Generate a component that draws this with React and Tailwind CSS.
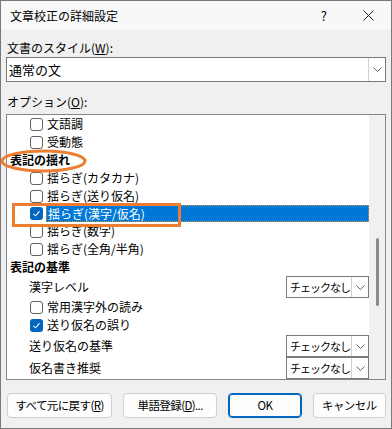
import React from 'react';

const font = { fontFamily: '"Noto Sans CJK JP", "Noto Sans", sans-serif' };

function Check({ on }) {
  if (on) {
    return (
      <span className="w-[13px] h-[13px] rounded-[3px] bg-[#0067c0] flex items-center justify-center shrink-0">
        <svg width="9" height="9" viewBox="0 0 9 9">
          <polyline points="1.5,4.8 3.6,6.8 7.5,2.2" fill="none" stroke="#fff" strokeWidth="1.1" />
        </svg>
      </span>
    );
  }
  return <span className="w-[13px] h-[13px] rounded-[3px] border border-[#616161] bg-white shrink-0" />;
}

function Chevron() {
  return (
    <svg width="9" height="5" viewBox="0 0 9 5">
      <polyline points="0.5,0.5 4.5,4.5 8.5,0.5" fill="none" stroke="#606060" strokeWidth="1" />
    </svg>
  );
}

function Row({ label, checked, selected }) {
  return (
    <div className="h-[18px] flex items-center pl-[23px]">
      <Check on={checked} />
      {selected ? (
        <span className="ml-[3px] flex-1 h-[17px] bg-[#0078d7] text-white pl-[1px] leading-[16px] border border-dotted border-[#e8962e]">
          {label}
        </span>
      ) : (
        <span className="ml-[4px]">{label}</span>
      )}
    </div>
  );
}

function Header({ label }) {
  return <div className="h-[18px] flex items-center pl-[3px] font-bold">{label}</div>;
}

function ComboRow({ label }) {
  return (
    <div className="h-[23px] flex items-center justify-between pl-[22px]">
      <span>{label}</span>
      <div className="w-[83px] h-[22px] border border-[#7a7a7a] bg-white flex shrink-0">
        <span className="flex-1 pl-[3px] leading-[20px] text-[11px] tracking-[-1px] whitespace-nowrap overflow-hidden">
          チェックなし
        </span>
        <span className="w-[17px] border-l border-[#d0d0d0] flex items-center justify-center">
          <Chevron />
        </span>
      </div>
    </div>
  );
}

function Btn({ children, primary, w }) {
  return (
    <button
      className={`h-[25px] rounded-[4px] bg-[#fdfdfd] text-[11.5px] tracking-[-0.6px] whitespace-nowrap ${w} ${
        primary ? 'border border-[#0067c0] shadow-[inset_0_0_0_1px_#0067c0]' : 'border border-[#d0d0d0]'
      }`}
    >
      {children}
    </button>
  );
}

export default function App() {
  return (
    <div style={font} className="relative w-[392px] h-[429px] border border-[#7a7a7a] bg-[#f0f0f0] text-[12px] text-black flex flex-col">
      {/* Title bar */}
      <div className="h-[29px] bg-[#f8f8f8] flex items-center pl-[9px] text-[12px]">
        <span>文章校正の詳細設定</span>
        <span className="ml-auto mr-[36px] text-[13px]">?</span>
        <svg className="mr-[17px]" width="11" height="11" viewBox="0 0 11 11">
          <path d="M0.5 0.5 L10.5 10.5 M10.5 0.5 L0.5 10.5" stroke="#222" strokeWidth="1" />
        </svg>
      </div>

      <div className="flex-1 px-[5px] flex flex-col">
        <div className="mt-[9px] h-[18px] leading-[18px] pl-[1px]">
          文書のスタイル(<span className="underline">W</span>):
        </div>
        <div className="h-[25px] border border-[#7a7a7a] bg-white flex">
          <span className="flex-1 pl-[2px] leading-[23px] text-[13px]">通常の文</span>
          <span className="w-[17px] border-l border-[#d0d0d0] flex items-center justify-center">
            <Chevron />
          </span>
        </div>

        <div className="mt-[11px] h-[18px] leading-[18px] pl-[1px]">
          オプション(<span className="underline">O</span>):
        </div>

        {/* Options list */}
        <div className="mt-[3px] h-[266px] border border-[#828790] bg-white flex overflow-hidden">
          <div className="flex-1 flex flex-col leading-[18px] text-[12px]">
            <Row label="文語調" />
            <Row label="受動態" />
            <Header label="表記の揺れ" />
            <Row label="揺らぎ(カタカナ)" />
            <Row label="揺らぎ(送り仮名)" />
            <Row label="揺らぎ(漢字/仮名)" checked selected />
            <Row label="揺らぎ(数字)" />
            <Row label="揺らぎ(全角/半角)" />
            <Header label="表記の基準" />
            <ComboRow label="漢字レベル" />
            <Row label="常用漢字外の読み" />
            <Row label="送り仮名の誤り" checked />
            <div className="h-[2px]" />
            <ComboRow label="送り仮名の基準" />
            <ComboRow label="仮名書き推奨" />
          </div>
          <div className="w-[16px] bg-[#f0f0f0] flex justify-center">
            <div className="mt-[123px] w-[3px] h-[68px] rounded-full bg-[#8a8a8a]" />
          </div>
        </div>

        {/* Buttons */}
        <div className="mt-[13px] flex gap-[11px] pl-[1px]">
          <Btn w="w-[106px]">
            すべて元に戻す(<span className="underline">R</span>)
          </Btn>
          <Btn w="w-[95px]">
            単語登録(<span className="underline">D</span>)...
          </Btn>
          <Btn w="w-[74px]" primary>
            OK
          </Btn>
          <Btn w="w-[74px]">キャンセル</Btn>
        </div>
      </div>

      {/* Annotations */}
      <svg className="absolute left-[-1px] top-[-1px] pointer-events-none" width="392" height="429">
        <ellipse cx="43.5" cy="161" rx="41.5" ry="10" fill="none" stroke="#ed7d31" strokeWidth="3" />
        <rect x="13.5" y="204.5" width="166" height="21" fill="none" stroke="#ed7d31" strokeWidth="3" />
      </svg>
    </div>
  );
}
